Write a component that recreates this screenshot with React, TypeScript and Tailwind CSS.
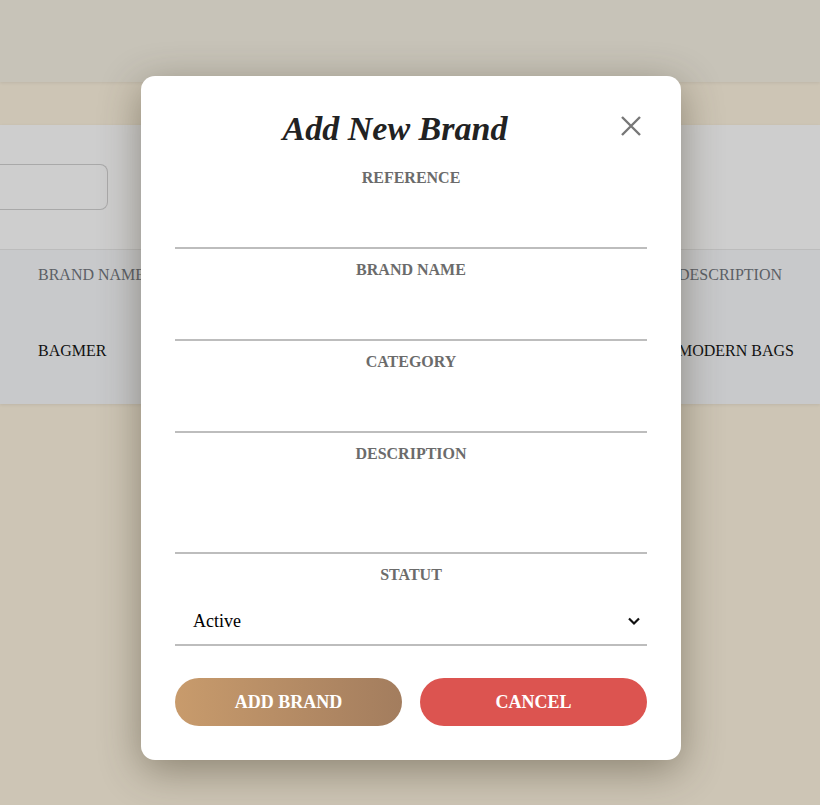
import React from "react";

const serif = "font-['Liberation_Serif','Times_New_Roman',serif]";

const Field = ({ label, tall }: { label: string; tall?: boolean }) => (
  <div className="flex flex-col mt-[12px] first:mt-[21px]">
    <label className="text-center text-[16px] leading-[18px] font-bold text-[#6b6b6b] uppercase">
      {label}
    </label>
    {tall ? (
      <textarea className="block h-[91px] w-full resize-none bg-transparent border-b-2 border-[#bdbdbd] outline-none" />
    ) : (
      <input className="h-[62px] w-full bg-transparent border-b-2 border-[#bdbdbd] outline-none" />
    )}
  </div>
);

const Modal = () => (
  <div
    className={`absolute left-[141px] top-[76px] w-[540px] rounded-[14px] bg-white px-[34px] pt-[34px] pb-[34px] shadow-[0_10px_40px_rgba(60,50,30,0.45)] ${serif}`}
  >
    <div className="flex items-center">
      <h2 className="flex-1 text-center text-[34px] leading-[38px] font-bold italic text-[#222]">
        Add New Brand
      </h2>
      <button className="mb-[6px] flex h-8 w-8 items-center justify-center">
        <svg width="20" height="20" viewBox="0 0 20 20" fill="none">
          <path d="M1 1L19 19M19 1L1 19" stroke="#777" strokeWidth="2.4" />
        </svg>
      </button>
    </div>

    <div className="flex flex-col">
      <Field label="Reference" />
      <Field label="Brand Name" />
      <Field label="Category" />
      <Field label="Description" tall />

      {/* Statut */}
      <div className="flex flex-col mt-[12px]">
        <label className="text-center text-[16px] leading-[18px] font-bold text-[#6b6b6b] uppercase">
          Statut
        </label>
        <div className="flex h-[62px] items-end justify-between border-b-2 border-[#bdbdbd] pl-[18px] pr-[6px] pb-[13px]">
          <span className="text-[18px] leading-[20px] text-black">Active</span>
          <svg width="14" height="10" viewBox="0 0 14 10" fill="none" className="mb-[5px]">
            <path d="M2 2.5L7 7.5L12 2.5" stroke="#111" strokeWidth="2.2" />
          </svg>
        </div>
      </div>
    </div>

    <div className="mt-[32px] flex gap-[18px]">
      <button className="h-[48px] flex-1 rounded-full bg-gradient-to-r from-[#c89b6c] to-[#a37d5e] text-[18px] font-bold text-white uppercase">
        Add Brand
      </button>
      <button className="h-[48px] flex-1 rounded-full bg-[#dc5450] text-[18px] font-bold text-white uppercase">
        Cancel
      </button>
    </div>
  </div>
);

export default function App() {
  return (
    <div className={`relative flex h-[805px] w-full flex-col overflow-hidden bg-[#cdc5b5] ${serif}`}>
      {/* page behind the overlay */}
      <div className="h-[82px] shrink-0 bg-[#c7c3b8] shadow-[0_1px_3px_rgba(0,0,0,0.08)]" />
      <div className="h-[43px] shrink-0" />
      <div className="flex h-[279px] shrink-0 flex-col bg-[#cecece] shadow-[0_1px_3px_rgba(0,0,0,0.08)]">
        <div className="flex h-[124px] items-start pt-[39px]">
          <div className="h-[46px] w-[108px] rounded-r-[8px] border border-l-0 border-[#a9a9a9]" />
        </div>
        <div className="flex flex-1 flex-col border-t border-[#bcbcbc] bg-[#c8c9cb]">
          <div className="flex h-[50px] items-center justify-between pl-[38px] pr-[38px] text-[16px] text-[#5c6066]">
            <span>BRAND NAME</span>
            <span>DESCRIPTION</span>
          </div>
          <div className="flex flex-1 items-center justify-between pl-[38px] pr-[26px] pb-[2px] text-[16px] text-[#111]">
            <span>BAGMER</span>
            <span>MODERN BAGS</span>
          </div>
        </div>
      </div>
      <div className="flex-1" />

      <Modal />
    </div>
  );
}
